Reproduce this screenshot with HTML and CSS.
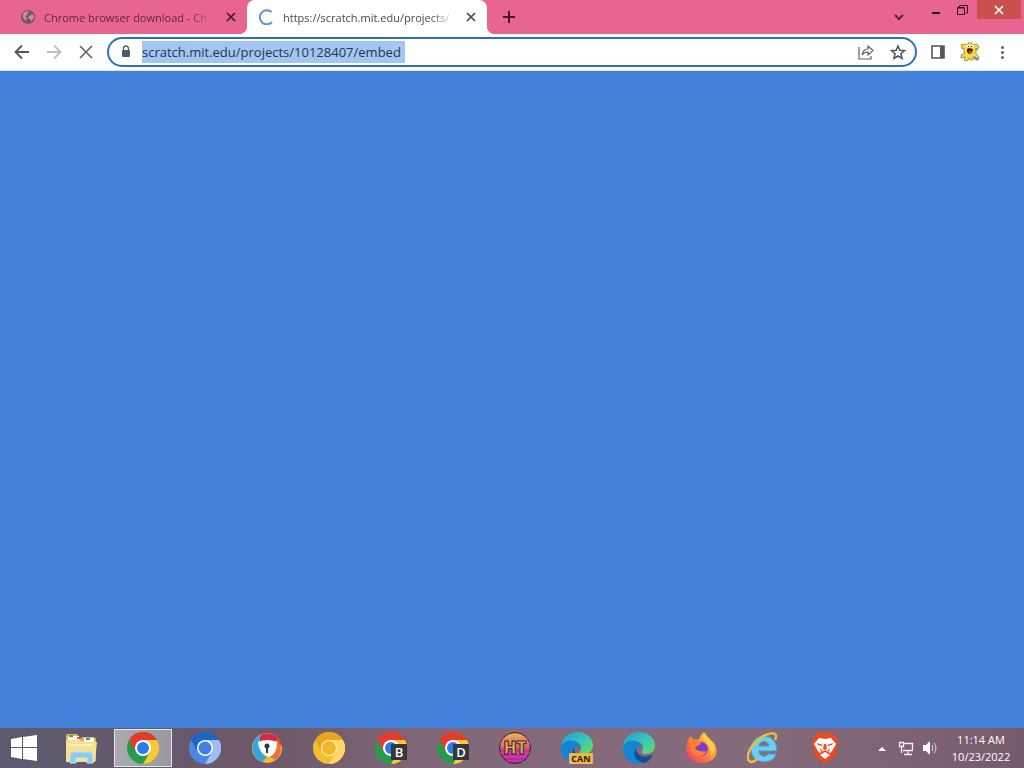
FILE: index.html
```html
<!DOCTYPE html>
<html lang="en">
<head>
    <meta charset="utf-8">
    <title>scratch.mit.edu</title>
    <link rel="stylesheet" href="styles.css">
</head>
<body>
    <!-- Shared shapes -->
    <svg class="defs" aria-hidden="true">
        <symbol id="close" viewBox="0 0 16 16">
            <path d="M4 4l8 8M12 4l-8 8" fill="none" stroke="currentColor" stroke-width="1.700"/>
        </symbol>
        <symbol id="chrome" viewBox="0 0 32 32">
            <circle cx="16" cy="16" r="16" fill="#259b4c"/>
            <path d="M2.100 8A16 16 0 0 1 29.900 8H16L9 20z" fill="#e33b2e"/>
            <path d="M29.900 8A16 16 0 0 1 16 32L23 20 16 8z" fill="#fcc934"/>
            <circle cx="16" cy="16" r="8" fill="#fff"/>
            <circle cx="16" cy="16" r="6" fill="#2a7ae8"/>
        </symbol>
        <symbol id="edge" viewBox="0 0 32 32">
            <path d="M0 15C1 5 8 0 16 0c9 0 16 6 16 13 0 6-4 9-9 9-4 0-5-2-4-3 3-4 0-9-6-10C7 8 2 10 0 15z" fill="url(#edgeTop)"/>
            <path d="M0 16C1 10 6 7 12 9c4 1 7 4 7 7-3-2-7 0-7 4 0 6 5 9 9 11-10 4-22-3-21-15z" fill="#1684d3"/>
            <path d="M13 16c-4 6 0 14 8 15 4-1 7-4 8-7 1-1 0-2-1-1-7 4-15 0-15-7z" fill="#164f91"/>
        </symbol>
        <linearGradient id="edgeTop" x1="0" y1="0" x2="1" y2="1">
            <stop offset="0" stop-color="#2397d9"/>
            <stop offset=".5" stop-color="#37c5bd"/>
            <stop offset="1" stop-color="#66e05a"/>
        </linearGradient>
    </svg>

    <div class="window">
        <!-- Tabs -->
        <header class="tabs">
            <div class="tab">
                <svg class="favicon" viewBox="0 0 16 16">
                    <circle cx="8" cy="8" r="7" fill="#735566"/>
                    <path d="M3 5c1-2 3-3 5-3l1 1-2 1 1 2-3 1 2 2-1 3-3-3zM10 6l3-1 1 4-3 3-1-2-2-1z" fill="#c98fa7"/>
                </svg>
                <span class="title">Chrome browser download - Ch</span>
                <button class="tab-close" aria-label="Close tab"><svg><use href="#close"/></svg></button>
            </div>
            <div class="tab active">
                <svg class="favicon" viewBox="0 0 16 16">
                    <path d="M12.500 3A7 7 0 1 0 13 13" fill="none" stroke="#5f8fd8" stroke-width="2"/>
                </svg>
                <span class="title">https://scratch.mit.edu/projects/</span>
                <button class="tab-close" aria-label="Close tab"><svg><use href="#close"/></svg></button>
            </div>
            <button class="new-tab" aria-label="New tab">
                <svg viewBox="0 0 16 16"><path d="M8 2v12M2 8h12" stroke="#42172a" stroke-width="2"/></svg>
            </button>
            <div class="controls">
                <button class="search-tabs" aria-label="Search tabs">
                    <svg viewBox="0 0 16 16"><path d="M4 6l4 4 4-4" fill="none" stroke="#5c2139" stroke-width="2"/></svg>
                </button>
                <button class="control" aria-label="Minimize">
                    <svg viewBox="0 0 16 16"><path d="M3 11h8" stroke="#301220" stroke-width="2"/></svg>
                </button>
                <button class="control" aria-label="Restore">
                    <svg viewBox="0 0 16 16"><path d="M3.500 5V3.500h8V11H9.500M1.500 5.500h7v7h-7z" fill="none" stroke="#301220"/><path d="M1 6h8" stroke="#301220"/></svg>
                </button>
                <button class="control close-window" aria-label="Close">
                    <svg><use href="#close"/></svg>
                </button>
            </div>
        </header>

        <!-- Toolbar -->
        <nav class="toolbar">
            <button class="tool" aria-label="Back">
                <svg viewBox="0 0 20 20"><path d="M17 10H4M10 3.500L3.500 10l6.500 6.500" fill="none" stroke="#505357" stroke-width="1.800"/></svg>
            </button>
            <button class="tool" aria-label="Forward" disabled>
                <svg viewBox="0 0 20 20"><path d="M3 10h13M10 3.500l6.500 6.500-6.500 6.500" fill="none" stroke="#bdbec0" stroke-width="1.800"/></svg>
            </button>
            <button class="tool" aria-label="Stop">
                <svg viewBox="0 0 20 20"><path d="M4 4l12 12M16 4L4 16" stroke="#5f6165" stroke-width="1.600"/></svg>
            </button>
            <div class="address">
                <svg class="lock" viewBox="0 0 16 16">
                    <rect x="4" y="6" width="8" height="7" rx="1" fill="#55585c"/>
                    <path d="M5.500 7V4.500a2.500 2.500 0 0 1 5 0V7" fill="none" stroke="#55585c" stroke-width="1.300"/>
                </svg>
                <input class="url" type="text" aria-label="Address" value="scratch.mit.edu/projects/10128407/embed">
                <button class="tool share" aria-label="Share">
                    <svg viewBox="0 0 20 20"><path d="M3 5v12h12v-3M6 13c1-5 4-6 6-6V4l5 4.500-5 4.500v-3c-2 0-4 0-6 3z" fill="none" stroke="#5f6165" stroke-width="1.200"/></svg>
                </button>
                <button class="tool" aria-label="Bookmark">
                    <svg viewBox="0 0 20 20"><path d="M10 4l1.800 4.300 4.700.4-3.600 3 1.200 4.800L10 14l-4.100 2.500 1.200-4.800-3.600-3 4.700-.4z" fill="none" stroke="#505357" stroke-width="1.500"/></svg>
                </button>
            </div>
            <button class="tool side-panel" aria-label="Side panel">
                <svg viewBox="0 0 20 20"><path d="M4 4h12v12H4z" fill="none" stroke="#55585c" stroke-width="1.600"/><path d="M12 4h4v12h-4z" fill="#55585c"/></svg>
            </button>
            <button class="tool" aria-label="Profile">
                <svg viewBox="0 0 20 20">
                    <path d="M1 3l3-1 3 1 1-2h4l1 2 4-1 2 3-2 3-1-2v6l2 2 1 3h-3l-3-2v3h-3l-1-2-2 3-3-1 1-3-4 1v-3l3-1V6L2 7z" fill="#f1db52" stroke="#91802f" stroke-width=".8"/>
                    <circle cx="8" cy="4" r="1.700" fill="#fff6be"/><circle cx="12" cy="4" r="1.700" fill="#fff6be"/>
                    <path d="M8 4h1v1H8zM11 4h1v1h-1z" fill="#222"/>
                    <path d="M7 7l2-1 4 1-1 4-3 1-2-2z" fill="#5b1c0d"/><path d="M9 9h3l-1 2H9z" fill="#e8482b"/>
                    <path d="M14 14l5 3-2 2-4-3z" fill="#8c8a7b"/>
                </svg>
            </button>
            <button class="tool menu" aria-label="Menu">
                <svg viewBox="0 0 20 20"><circle cx="10.500" cy="5.500" r="1.500" fill="#5f6165"/><circle cx="10.500" cy="10.500" r="1.500" fill="#5f6165"/><circle cx="10.500" cy="15.500" r="1.500" fill="#5f6165"/></svg>
            </button>
        </nav>

        <main class="page"></main>
    </div>

    <!-- Taskbar -->
    <footer class="taskbar">
        <button class="start" aria-label="Start">
            <svg viewBox="0 0 28 28"><path d="M1 5l11-2v10H1zM13 3l14-2v12H13zM1 14h11v11L1 23zM13 14h14v13l-14-2z" fill="#fff"/></svg>
        </button>
        <div class="apps">
            <button class="app" aria-label="File Explorer">
                <svg viewBox="0 0 32 32">
                    <path d="M1 4q0-2 2-2h9l2 3h14q3 0 3 3v21H1z" fill="#d9ba62"/>
                    <path d="M3 4h11v5H3zM19 6h10v4H19z" fill="#fffbe8"/>
                    <path d="M4 3h4v2H4z" fill="#36a853"/><path d="M12 5h5v2h-5z" fill="#df5342"/><path d="M21 6h4v2h-4z" fill="#4584c9"/>
                    <path d="M1 8h14l3 2h14l-2 20H1z" fill="#f5df91"/>
                    <path d="M3 12h25v2H3z" fill="#fff0b7"/>
                    <path d="M5 31V23q0-3 3-3h17q3 0 3 3v8h-6v-5H11v5z" fill="#8fcce4" stroke="#bdeafa"/>
                </svg>
            </button>
            <button class="app current" aria-label="Chrome"><svg><use href="#chrome"/></svg></button>
            <button class="app" aria-label="Chromium">
                <svg viewBox="0 0 32 32">
                    <circle cx="16" cy="16" r="16" fill="#4c86e8"/>
                    <path d="M2.100 8A16 16 0 0 1 29.900 8H16L9 20z" fill="#1965cb"/>
                    <path d="M29.900 8A16 16 0 0 1 16 32L23 20 16 8z" fill="#9fbdf5"/>
                    <circle cx="16" cy="16" r="8" fill="#fff"/><circle cx="16" cy="16" r="6.500" fill="#427fe1"/>
                </svg>
            </button>
            <button class="app" aria-label="Secure Browser">
                <svg viewBox="0 0 32 32">
                    <circle cx="16" cy="16" r="15" fill="#f4b83f"/>
                    <path d="M9 3a15 15 0 0 1 22 12L26 9 9 10z" fill="#d92749"/>
                    <path d="M11 2C7 8 6 20 16 25l-5 5A15 15 0 0 1 11 2z" fill="#32a8df"/>
                    <path d="M26 7a15 15 0 0 1-1 21l-6-3z" fill="#ef6f37"/>
                    <path d="M7 10q9-4 19 0 0 13-8 15Q8 22 7 10z" fill="#fff"/>
                    <circle cx="16" cy="14" r="2.500" fill="#273946"/><path d="M15 15h2v6h-2z" fill="#273946"/>
                </svg>
            </button>
            <button class="app" aria-label="Chrome Canary">
                <svg viewBox="0 0 32 32">
                    <circle cx="16" cy="16" r="16" fill="#f5be31"/>
                    <path d="M2.100 8A16 16 0 0 1 29.900 8H16L9 20z" fill="#eaa51b"/>
                    <path d="M29.900 8A16 16 0 0 1 16 32L23 20 16 8z" fill="#ffd869"/>
                    <circle cx="16" cy="16" r="8" fill="#fff0bd"/><circle cx="16" cy="16" r="7" fill="#efb52d"/>
                </svg>
            </button>
            <button class="app" aria-label="Chrome Beta">
                <svg viewBox="0 0 32 32"><use href="#chrome"/><path d="M16 12h16v16H16z" fill="#34383b"/><text class="channel" x="24" y="25">B</text></svg>
            </button>
            <button class="app" aria-label="Chrome Dev">
                <svg viewBox="0 0 32 32"><use href="#chrome"/><path d="M16 12h16v16H16z" fill="#34383b"/><text class="channel" x="24" y="25">D</text></svg>
            </button>
            <button class="app" aria-label="HT">
                <svg viewBox="0 0 32 32">
                    <defs><linearGradient id="sunset" x1="0" y1="0" x2="0" y2="1"><stop offset="0" stop-color="#edb446"/><stop offset=".35" stop-color="#df8b62"/><stop offset=".6" stop-color="#c23790"/><stop offset="1" stop-color="#b51dac"/></linearGradient></defs>
                    <circle cx="16" cy="16" r="15.500" fill="url(#sunset)" stroke="#352034"/>
                    <path d="M3 7h26M1 11h30M1 21h30M4 25h24M8 29h16" stroke="#e06bab" stroke-width="1" opacity=".6"/>
                    <text class="ht" x="16" y="22">HT</text>
                </svg>
            </button>
            <button class="app" aria-label="Edge Canary">
                <svg viewBox="0 0 32 32"><use href="#edge"/><rect x="8" y="21" width="24" height="11" rx="1" fill="#f5b544"/><text class="can" x="20" y="30">CAN</text></svg>
            </button>
            <button class="app" aria-label="Edge"><svg><use href="#edge"/></svg></button>
            <button class="app" aria-label="Firefox">
                <svg viewBox="0 0 32 32">
                    <defs><linearGradient id="flame" x1="1" y1="0" x2="0" y2="1"><stop offset="0" stop-color="#ffe34b"/><stop offset=".5" stop-color="#ff883b"/><stop offset="1" stop-color="#ef3069"/></linearGradient></defs>
                    <path d="M3 8l2-4 4 4 5-1 2-4 3-3 4 5 6 6c7 13-2 20-12 20C5 31-2 21 3 8z" fill="url(#flame)"/>
                    <circle cx="16" cy="17" r="7" fill="#7840c8"/>
                    <path d="M5 7c4-1 7 1 11 4-1 3-5 2-6 5 3 4 8 4 12 3-3 6-12 7-16 0z" fill="#ff8130"/>
                    <path d="M17 6l2-5c2 5 8 7 10 13 1 5-1 8-3 10 0-7-2-12-9-18z" fill="#ffcf42"/>
                </svg>
            </button>
            <button class="app" aria-label="Internet Explorer">
                <svg viewBox="0 0 32 32">
                    <path d="M17 4C9 4 4 10 4 17c0 8 6 13 13 13 6 0 11-3 12-8h-8c-3 4-9 2-9-3h18C30 10 25 4 17 4zm-5 10c1-6 9-6 10 0z" fill="#70ccee" fill-rule="evenodd" stroke="#3d9dcc"/>
                    <path d="M28 8c5-10-9-8-18 1C2 16-3 28 4 30q3 0 6-3" fill="none" stroke="#eebf35" stroke-width="2.500"/>
                </svg>
            </button>
            <button class="app" aria-label="Brave">
                <svg viewBox="0 0 32 32">
                    <path d="M9 1h14l4 4 2 4-3 15-10 8-10-8L3 9l2-4z" fill="#ef4b21"/>
                    <path d="M10 6l6 1 6-1 5 6-4 7-2 2-5-3-5 3-2-2-4-7zM16 20l5 3-5 4-5-4z" fill="#fff"/>
                    <path d="M8 11l6 2-1 1-4-1zM24 11l-6 2 1 1 4-1zM15 12h2l1 5-2 1-2-1zM11 16l3 3-2 1zM21 16l-3 3 2 1z" fill="#ef4b21"/>
                </svg>
            </button>
        </div>
        <div class="tray">
            <svg viewBox="0 0 16 16"><path d="M4 11l4-4 4 4z" fill="#fff"/></svg>
            <svg viewBox="0 0 16 16"><path d="M6 3.500h8.500v7H5M10 11v3M6 14.500h8M1.500 2.500h4v4h-4zM3.500 7v6" fill="none" stroke="#f5eef3" stroke-width="1.300"/></svg>
            <svg viewBox="0 0 16 16"><path d="M1 5h3l4-4v14l-4-4H1z" fill="#fff"/><path d="M10 5q2 3 0 6M12 3q4 5 0 10" fill="none" stroke="#e5dce2"/></svg>
        </div>
        <div class="clock">
            <span>11:14 AM</span>
            <span>10/23/2022</span>
        </div>
    </footer>
</body>
</html>
```
FILE: styles.css
```css
* {
    box-sizing: border-box;
}

body {
    margin: 0;
    height: 100vh;
    display: flex;
    flex-direction: column;
    font-family: "Open Sans", "Noto Sans", sans-serif;
    background-color: #4380d9;
    overflow: hidden;
}

button {
    display: flex;
    align-items: center;
    justify-content: center;
    flex-shrink: 0;
    padding: 0;
    border: none;
    background: none;
}

svg {
    display: block;
    flex-shrink: 0;
}

.defs {
    position: absolute;
    width: 0;
    height: 0;
}

.window {
    flex: 1;
    display: flex;
    flex-direction: column;
}

/* Tabs */
.tabs {
    display: flex;
    height: 34px;
    padding-left: 7px;
    background-color: #e86591;
}

.tab {
    position: relative;
    display: flex;
    align-items: center;
    width: 240px;
    padding: 0 8px 0 13px;
    font-size: 11px;
    color: #5b2b40;
}

.tab.active {
    padding-left: 12px;
    background-color: white;
    border-radius: 8px 8px 0 0;
    color: #45484c;
}

/* Curved feet of the active tab */
.tab.active::before,
.tab.active::after {
    content: "";
    position: absolute;
    bottom: 0;
    width: 8px;
    height: 8px;
}

.tab.active::before {
    left: -8px;
    background: radial-gradient(circle at 0 0, transparent 8px, white 8px);
}

.tab.active::after {
    right: -8px;
    background: radial-gradient(circle at 100% 0, transparent 8px, white 8px);
}

.favicon {
    width: 16px;
    height: 16px;
    margin-right: 8px;
}

.title {
    flex: 1;
    overflow: hidden;
    white-space: nowrap;
    -webkit-mask-image: linear-gradient(to right, black 85%, transparent);
    mask-image: linear-gradient(to right, black 85%, transparent);
}

.tab-close {
    width: 16px;
    height: 16px;
    margin-left: 8px;
    color: #42172a;
}

.active .tab-close {
    color: #45484c;
}

.tab-close svg,
.control svg,
.new-tab svg,
.search-tabs svg {
    width: 16px;
    height: 16px;
}

.new-tab {
    width: 44px;
}

.controls {
    display: flex;
    align-items: flex-start;
    margin-left: auto;
    padding-right: 3px;
}

.search-tabs {
    width: 48px;
    height: 34px;
}

.control {
    width: 27px;
    height: 19px;
}

.close-window {
    width: 44px;
    background-color: #c9504f;
    color: white;
}

/* Toolbar */
.toolbar {
    display: flex;
    align-items: center;
    height: 37px;
    padding: 0 6px;
    background-color: white;
    border-bottom: 1px solid #dfe5ef;
}

.tool {
    width: 32px;
    height: 28px;
}

.tool svg {
    width: 20px;
    height: 20px;
}

.address {
    flex: 1;
    display: flex;
    align-items: center;
    height: 30px;
    margin: 0 5px;
    padding: 0 1px 0 9px;
    border: 2px solid #2e70bd;
    border-radius: 15px;
}

.lock {
    width: 16px;
    height: 16px;
    margin-right: 8px;
}

.url {
    width: 263px;
    height: 22px;
    padding: 0;
    border: none;
    background-color: #a5c5f1;
    font: 13px "Open Sans", "Noto Sans", sans-serif;
    color: #203750;
}

.share {
    margin-left: auto;
}

.page {
    flex: 1;
    background-color: #4380d9;
}

/* Taskbar */
.taskbar {
    display: flex;
    align-items: center;
    height: 40px;
    background: linear-gradient(to right, #5c5a70, #6c5868 25%, #82697a 45%, #856a7c 75%, #765b6c);
    color: white;
}

.start {
    width: 48px;
    height: 40px;
}

.start svg {
    width: 28px;
    height: 28px;
}

.apps {
    display: flex;
    gap: 4px;
    margin-left: 4px;
}

.app {
    width: 58px;
    height: 38px;
}

.app svg {
    width: 32px;
    height: 32px;
}

.current {
    background: linear-gradient(to right, #aaaab0, #98989e);
    border: 1px solid #e6e6ea;
}

.channel,
.ht,
.can {
    font-family: "Open Sans", sans-serif;
    text-anchor: middle;
}

.channel {
    font-size: 13px;
    font-weight: 600;
    fill: white;
}

.ht {
    font-size: 17px;
    font-weight: 800;
    fill: #f0b044;
    stroke: #3b1734;
    stroke-width: 1px;
}

.can {
    font-size: 9px;
    font-weight: 700;
    fill: #2b210e;
}

.tray {
    display: flex;
    gap: 8px;
    margin-left: auto;
}

.tray svg {
    width: 16px;
    height: 16px;
}

.clock {
    display: flex;
    flex-direction: column;
    align-items: center;
    width: 86px;
    font-size: 11px;
    line-height: 17px;
}
```
